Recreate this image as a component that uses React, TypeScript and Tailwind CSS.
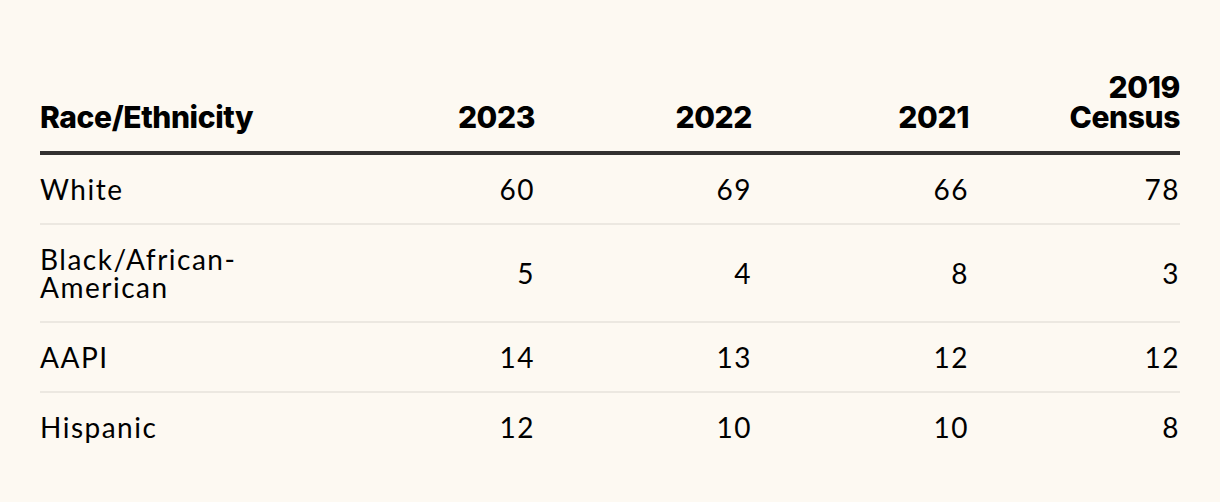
const rows = [
  { label: ["White"], values: ["60", "69", "66", "78"] },
  { label: ["Black/African-", "American"], values: ["5", "4", "8", "3"] },
  { label: ["AAPI"], values: ["14", "13", "12", "12"] },
  { label: ["Hispanic"], values: ["12", "10", "10", "8"] },
];

const columns = [["2023"], ["2022"], ["2021"], ["2019", "Census"]];

export default function App() {
  return (
    <div className="min-h-[502px] w-full bg-[#fdf9f2] px-10 pt-[72px] font-['Lato',sans-serif] text-black">
      <div className="grid grid-cols-[278px_217px_217px_217px_211px] items-end border-b-4 border-[#333130] pb-[19px] font-['Inter',sans-serif] text-[30px] font-extrabold leading-[30px] tracking-[-0.4px]">
        <div>Race/Ethnicity</div>
        {columns.map((col) => (
          <div key={col.join(" ")} className="text-right">
            {col.map((line) => (
              <div key={line}>{line}</div>
            ))}
          </div>
        ))}
      </div>

      {rows.map((row, index) => (
        <div
          key={row.label.join(" ")}
          className={`grid grid-cols-[278px_217px_217px_217px_211px] items-center py-[20px] text-[28px] leading-[28px] tracking-[1.5px] ${
            index < rows.length - 1 ? "border-b-2 border-[#ece8e1]" : ""
          }`}
        >
          <div>
            {row.label.map((line) => (
              <div key={line}>{line}</div>
            ))}
          </div>
          {row.values.map((value, i) => (
            <div key={i} className="text-right">
              {value}
            </div>
          ))}
        </div>
      ))}
    </div>
  );
}
